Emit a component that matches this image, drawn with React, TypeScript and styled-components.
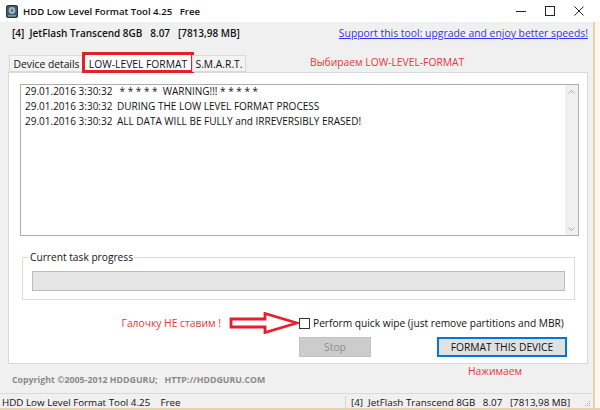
import React from "react";
import styled, { createGlobalStyle } from "styled-components";

const GlobalStyle = createGlobalStyle`
  html, body { margin: 0; padding: 0; background: #fbf8f4; }
  body { font-family: "Open Sans", "Segoe UI", Arial, sans-serif; color: #111; }
  * { box-sizing: border-box; }
`;

const Screen = styled.div`
  width: 600px;
  height: 410px;
  display: flex;
  flex-direction: column;
  overflow: hidden;
  background: #fbf8f4;
`;

const TitleBar = styled.div`
  height: 22px;
  flex: none;
  background: #ffffff;
  display: flex;
  align-items: center;
  padding-left: 6px;
`;

const TitleText = styled.span`
  margin-left: 5px;
  font-size: 9.6px;
  font-weight: 600;
  white-space: pre;
  color: #111;
`;

const WinControls = styled.div`
  margin-left: auto;
  display: flex;
  height: 100%;
  padding-right: 7px;
`;

const WinButton = styled.div`
  width: 29px;
  height: 100%;
  display: flex;
  align-items: center;
  justify-content: center;
`;

const Frame = styled.div`
  flex: 1;
  display: flex;
  border-bottom: 2px solid #ead1ad;
`;

const WindowBody = styled.div`
  width: 595px;
  background: #f0f0f0;
  border-right: 2px solid #ead1ad;
  display: flex;
  flex-direction: column;
  position: relative;
`;

const HeaderRow = styled.div`
  height: 22px;
  flex: none;
  display: flex;
  align-items: center;
  justify-content: space-between;
  padding: 0 5px 0 12px;
`;

const DeviceInfo = styled.span`
  font-size: 10px;
  font-weight: 600;
  white-space: pre;
`;

const SupportLink = styled.a`
  font-size: 10.4px;
  color: #3434ee;
  text-decoration: underline;
  white-space: nowrap;
`;

const TabsRow = styled.div`
  margin-top: 7px;
  height: 21px;
  flex: none;
  display: flex;
  align-items: flex-end;
  padding-left: 9px;
  position: relative;
  z-index: 2;
`;

const Tab = styled.div<{ $active?: boolean; $w: number }>`
  position: relative;
  width: ${(p) => p.$w}px;
  height: ${(p) => (p.$active ? 19 : 17)}px;
  margin-bottom: ${(p) => (p.$active ? -1 : 0)}px;
  background: ${(p) => (p.$active ? "#ffffff" : "#f3f3f3")};
  border: 1px solid #d9d9d9;
  border-bottom: ${(p) => (p.$active ? "none" : "1px solid #d9d9d9")};
  display: flex;
  align-items: center;
  justify-content: center;
  font-size: 10.3px;
  color: #111;
  white-space: nowrap;
`;

const RedFrame = styled.div`
  position: absolute;
  left: -3px;
  right: -3px;
  top: -3px;
  bottom: 0;
  border: 3px solid #e3202b;
  pointer-events: none;
`;

const RedNote = styled.span<{ $ml?: number }>`
  margin-left: ${(p) => p.$ml ?? 0}px;
  align-self: center;
  font-size: 10.3px;
  color: #e8363a;
  white-space: nowrap;
`;

const Panel = styled.div`
  height: 292px;
  flex: none;
  margin: 0 5px 0 8px;
  background: #ffffff;
  border: 1px solid #d9d9d9;
  padding-top: 11px;
  display: flex;
  flex-direction: column;
  position: relative;
  z-index: 1;
`;

const LogBox = styled.div`
  margin: 0 8px 0 11px;
  height: 152px;
  border: 1px solid #abadb3;
  display: flex;
  background: #fff;
`;

const LogLines = styled.div`
  flex: 1;
  padding: 0 0 0 4px;
  margin-top: -1px;
  font-size: 10px;
  line-height: 15px;
`;

const LogLine = styled.div`
  display: flex;
  white-space: pre;
`;

const Stamp = styled.span`
  width: 92px;
  flex: none;
`;

const ScrollTrack = styled.div`
  width: 13px;
  background: #f0f0f0;
  display: flex;
  flex-direction: column;
  justify-content: space-between;
  align-items: center;
  padding: 5px 0 4px;
`;

const GroupBox = styled.fieldset`
  margin: 14px 12px 0 13px;
  border: 1px solid #dcdcdc;
  padding: 7px 9px 8px 9px;
  min-width: 0;
`;

const Legend = styled.legend`
  font-size: 10.2px;
  line-height: 14px;
  padding: 0 1px;
  margin-left: -3px;
  color: #111;
`;

const ProgressBar = styled.div`
  height: 20px;
  background: #e6e6e6;
  border: 1px solid #bcbcbc;
`;

const CheckRow = styled.div`
  margin-top: 12px;
  height: 16px;
  display: grid;
  grid-template-columns: 290px 14px 1fr;
  align-items: center;
`;

const NoteWithArrow = styled.div`
  display: flex;
  align-items: center;
  justify-content: flex-end;
  gap: 8px;
`;

const CheckBox = styled.span`
  width: 11px;
  height: 11px;
  border: 1px solid #333;
  background: #fff;
`;

const CheckLabel = styled.span`
  font-size: 10.2px;
  white-space: nowrap;
  margin-left: 0;
`;

const ButtonRow = styled.div`
  margin-top: 9px;
  height: 20px;
  display: flex;
  padding-left: 290px;
`;

const Button = styled.div<{ $primary?: boolean; $w: number; $ml?: number }>`
  width: ${(p) => p.$w}px;
  margin-left: ${(p) => p.$ml ?? 0}px;
  height: 20px;
  display: flex;
  align-items: center;
  justify-content: center;
  font-size: 10.3px;
  background: ${(p) => (p.$primary ? "#e1e1e1" : "#cccccc")};
  border: 1px solid ${(p) => (p.$primary ? "#0078d7" : "#c2c2c2")};
  box-shadow: ${(p) => (p.$primary ? "inset 0 0 0 1px #0078d7" : "none")};
  color: ${(p) => (p.$primary ? "#111" : "#8c8c8c")};
`;

const PressNote = styled.span`
  position: absolute;
  left: 468px;
  top: 342px;
  font-size: 10.3px;
  color: #e8363a;
  z-index: 3;
`;

const Copyright = styled.div`
  margin-top: 9px;
  height: 14px;
  padding-left: 12px;
  display: flex;
  align-items: center;
  font-size: 8.8px;
  font-weight: 700;
  color: #8a8a8a;
  white-space: pre;
`;

const StatusBar = styled.div`
  margin-top: auto;
  height: 15px;
  border-top: 1px solid #dadada;
  display: flex;
  align-items: center;
  padding-top: 2px;
  font-size: 9.8px;
  white-space: pre;
`;

const StatusPane = styled.div<{ $grow?: boolean; $sep?: boolean }>`
  height: 100%;
  display: flex;
  align-items: center;
  ${(p) => (p.$grow ? "flex: 1;" : "")}
  padding-left: ${(p) => (p.$sep ? 5 : 2)}px;
  border-left: ${(p) => (p.$sep ? "1px solid #d5d5d5" : "none")};
  width: ${(p) => (p.$sep ? "240px" : "auto")};
`;

const Grip = styled.div`
  width: 8px;
  height: 100%;
  display: flex;
  align-items: flex-end;
  padding-bottom: 1px;
`;

const EdgeStrip = styled.div`
  flex: 1;
  background: #fbf8f4;
`;

const AppIcon = () => (
  <svg width="12" height="13" viewBox="0 0 12 13">
    <rect x="0.5" y="0.5" width="11" height="12" rx="1.5" fill="#3f5a6b" stroke="#26394a" />
    <circle cx="6" cy="5.5" r="3.4" fill="#9fb4c2" />
    <circle cx="6" cy="5.5" r="1" fill="#2d4252" />
    <rect x="2" y="10" width="8" height="1.5" fill="#7f98a8" />
  </svg>
);

const Arrow = () => (
  <svg width="70" height="22" viewBox="0 0 70 22">
    <polygon
      points="2,7 36,7 36,1.5 68,11 36,20.5 36,15 2,15"
      fill="#fff"
      stroke="#e3202b"
      strokeWidth="2.8"
      strokeLinejoin="miter"
    />
  </svg>
);

const Chevron = ({ up }: { up?: boolean }) => (
  <svg width="7" height="4" viewBox="0 0 7 4">
    <polyline
      points={up ? "0.5,3.5 3.5,0.5 6.5,3.5" : "0.5,0.5 3.5,3.5 6.5,0.5"}
      fill="none"
      stroke="#a6a6a6"
      strokeWidth="1"
    />
  </svg>
);

const logs = [
  " * * * * *  WARNING!!! * * * * *",
  "DURING THE LOW LEVEL FORMAT PROCESS",
  "ALL DATA WILL BE FULLY and IRREVERSIBLY ERASED!",
];

export default function App() {
  return (
    <>
      <GlobalStyle />
      <Screen>
        <TitleBar>
          <AppIcon />
          <TitleText>HDD Low Level Format Tool 4.25   Free</TitleText>
          <WinControls>
            <WinButton>
              <svg width="10" height="10" viewBox="0 0 10 10">
                <line x1="0" y1="5.5" x2="10" y2="5.5" stroke="#222" strokeWidth="1" />
              </svg>
            </WinButton>
            <WinButton>
              <svg width="10" height="10" viewBox="0 0 10 10">
                <rect x="0.5" y="0.5" width="9" height="9" fill="none" stroke="#222" strokeWidth="1" />
              </svg>
            </WinButton>
            <WinButton>
              <svg width="10" height="10" viewBox="0 0 10 10">
                <path d="M0.5 0.5 L9.5 9.5 M9.5 0.5 L0.5 9.5" stroke="#222" strokeWidth="1" />
              </svg>
            </WinButton>
          </WinControls>
        </TitleBar>
        <Frame>
          <WindowBody>
            <HeaderRow>
              <DeviceInfo>[4]  JetFlash Transcend 8GB   8.07   [7813,98 MB]</DeviceInfo>
              <SupportLink href="#">Support this tool: upgrade and enjoy better speeds!</SupportLink>
            </HeaderRow>
            <TabsRow>
              <Tab $w={75}>Device details</Tab>
              <Tab $w={108} $active>
                LOW-LEVEL FORMAT
                <RedFrame />
              </Tab>
              <Tab $w={54}>S.M.A.R.T.</Tab>
              <RedNote $ml={64}>Выбираем LOW-LEVEL-FORMAT</RedNote>
            </TabsRow>
            <Panel>
              <LogBox>
                <LogLines>
                  {logs.map((m, i) => (
                    <LogLine key={i}>
                      <Stamp>29.01.2016 3:30:32</Stamp>
                      <span>{m}</span>
                    </LogLine>
                  ))}
                </LogLines>
                <ScrollTrack>
                  <Chevron up />
                  <Chevron />
                </ScrollTrack>
              </LogBox>
              <GroupBox>
                <Legend>Current task progress</Legend>
                <ProgressBar />
              </GroupBox>
              <CheckRow>
                <NoteWithArrow>
                  <RedNote>Галочку НЕ ставим !</RedNote>
                  <Arrow />
                </NoteWithArrow>
                <CheckBox />
                <CheckLabel>Perform quick wipe (just remove partitions and MBR)</CheckLabel>
              </CheckRow>
              <ButtonRow>
                <Button $w={72}>Stop</Button>
                <Button $w={130} $ml={66} $primary>
                  FORMAT THIS DEVICE
                </Button>
              </ButtonRow>
            </Panel>
            <PressNote>Нажимаем</PressNote>
            <Copyright>Copyright ©2005-2012 HDDGURU;   HTTP://HDDGURU.COM</Copyright>
            <StatusBar>
              <StatusPane $grow>HDD Low Level Format Tool 4.25    Free</StatusPane>
              <StatusPane $sep>[4]  JetFlash Transcend 8GB   8.07   [7813,98 MB]</StatusPane>
              <Grip>
                <svg width="6" height="6" viewBox="0 0 6 6">
                  <rect x="4" y="0" width="1" height="1" fill="#aaa" />
                  <rect x="2" y="2" width="1" height="1" fill="#aaa" />
                  <rect x="4" y="2" width="1" height="1" fill="#aaa" />
                  <rect x="0" y="4" width="1" height="1" fill="#aaa" />
                  <rect x="2" y="4" width="1" height="1" fill="#aaa" />
                  <rect x="4" y="4" width="1" height="1" fill="#aaa" />
                </svg>
              </Grip>
            </StatusBar>
          </WindowBody>
          <EdgeStrip />
        </Frame>
      </Screen>
    </>
  );
}
